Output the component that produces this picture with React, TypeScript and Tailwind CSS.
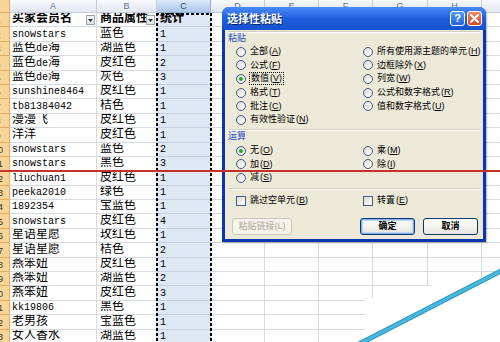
import React from "react";

const colW = [
  "w-[87px]",
  "w-[60px]",
  "w-[54px]",
  "w-[54px]",
  "w-[54px]",
  "w-[54px]",
  "w-[55px]",
  "w-[54px]",
  "w-[60px]",
];
const letters = ["A", "B", "C", "D", "E", "F", "G", "H", "I"];

const rows: [string, string, string][] = [
  ["买家会员名", "商品属性", "统计"],
  ["snowstars", "蓝色", "1"],
  ["蓝色de海", "湖蓝色", "1"],
  ["蓝色de海", "皮红色", "2"],
  ["蓝色de海", "灰色", "3"],
  ["sunshine8464", "皮红色", "1"],
  ["tb81384042", "桔色", "1"],
  ["漫漫飞", "皮红色", "1"],
  ["洋洋", "皮红色", "1"],
  ["snowstars", "蓝色", "2"],
  ["snowstars", "黑色", "3"],
  ["liuchuan1", "皮红色", "1"],
  ["peeka2010", "绿色", "1"],
  ["1892354", "宝蓝色", "1"],
  ["snowstars", "皮红色", "4"],
  ["星语星愿", "玫红色", "1"],
  ["星语星愿", "桔色", "2"],
  ["燕笨妞", "皮红色", "1"],
  ["燕笨妞", "湖蓝色", "2"],
  ["燕笨妞", "皮红色", "3"],
  ["kk19806", "黑色", "1"],
  ["老男孩", "宝蓝色", "1"],
  ["女人香水", "湖蓝色", "1"],
];

function Mixed({ text }: { text: string }) {
  const parts = text.match(/[\x00-\x7f]+|[^\x00-\x7f]+/g) || [];
  return (
    <>
      {parts.map((p, i) =>
        /^[\x00-\x7f]+$/.test(p) ? (
          <span key={i} className="text-[10px]">
            {p}
          </span>
        ) : (
          <span key={i}>{p}</span>
        )
      )}
    </>
  );
}

function Dropdown() {
  return (
    <span className="absolute right-[1px] top-[2px] w-[9px] h-[10px] border border-[#9aa3b0] bg-gradient-to-b from-[#fbfbfb] to-[#dcdfe4] flex items-center justify-center">
      <svg width="5" height="3" viewBox="0 0 5 3">
        <path d="M0 0 L5 0 L2.5 3 Z" fill="#333" />
      </svg>
    </span>
  );
}

function RowHead({ n }: { n: number }) {
  return (
    <div className="w-[10px] shrink-0 overflow-hidden bg-[#f8d596] border-b border-r border-[#e2ad5c] flex items-end">
      <div className="w-[24px] -ml-[14px] shrink-0 text-center text-[9px] leading-[12px] text-[#333] font-['Liberation_Sans',sans-serif]">
        {n}
      </div>
    </div>
  );
}

function Sheet() {
  return (
    <div className="flex flex-col">
      <div className="flex h-[13px] shrink-0">
        <div className="w-[10px] shrink-0 bg-[#f8d596] border-b border-r border-[#e2ad5c]" />
        {letters.map((l, i) => (
          <div
            key={l}
            className={`${colW[i]} shrink-0 flex items-center justify-center border-b border-r text-[9px] leading-[12px] font-['Liberation_Sans',sans-serif] ${
              i === 2
                ? "bg-gradient-to-b from-[#dbe8f8] to-[#aac6ea] border-[#8fb0d8] text-[#2b4a7a]"
                : "bg-gradient-to-b from-[#f7f9fc] to-[#e2e8f1] border-[#c5cddb] text-[#5f7290]"
            }`}
          >
            {l}
          </div>
        ))}
      </div>
      {rows.map((r, ri) => (
        <div key={ri} className="flex h-[14.4px] shrink-0">
          <RowHead n={ri + 1} />
          <div
            className={`${colW[0]} relative shrink-0 flex items-end overflow-hidden whitespace-nowrap border-b border-r border-[#d6dbe3] bg-white pl-[2px] text-[12px] leading-[13px] text-black font-['Liberation_Mono','Noto_Sans_CJK_SC',monospace] ${
              ri === 0 ? "font-bold" : ""
            }`}
          >
            <Mixed text={r[0]} />
            {ri === 0 && <Dropdown />}
          </div>
          <div
            className={`${colW[1]} relative shrink-0 flex items-end overflow-hidden whitespace-nowrap border-b border-r border-[#d6dbe3] bg-white pl-[3px] text-[12px] leading-[13px] text-black font-['Liberation_Mono','Noto_Sans_CJK_SC',monospace] ${
              ri === 0 ? "font-bold" : ""
            }`}
          >
            <Mixed text={r[1]} />
            {ri === 0 && <Dropdown />}
          </div>
          <div
            className={`${colW[2]} shrink-0 flex items-end overflow-hidden whitespace-nowrap border-b border-r border-[#c5cfdf] bg-[#dfe7f2] pl-[3px] text-[12px] leading-[13px] text-black font-['Liberation_Mono','Noto_Sans_CJK_SC',monospace] ${
              ri === 0 ? "font-bold" : ""
            }`}
          >
            <Mixed text={r[2]} />
          </div>
          {colW.slice(3).map((w, ci) => (
            <div key={ci} className={`${w} shrink-0 border-b border-r border-[#d6dbe3] bg-white`} />
          ))}
        </div>
      ))}
    </div>
  );
}

function Radio({ checked }: { checked?: boolean }) {
  return (
    <span className="w-[10px] h-[10px] shrink-0 rounded-full border border-[#3d5c86] bg-gradient-to-br from-[#dcdad2] to-white flex items-center justify-center">
      {checked && <span className="w-[4px] h-[4px] rounded-full bg-[#2aa52a]" />}
    </span>
  );
}

function Check() {
  return <span className="w-[10px] h-[10px] shrink-0 border border-[#3d5c86] bg-gradient-to-br from-[#dcdad2] to-white" />;
}

type Opt = [string, string, boolean?] | null;

function Label({ t, k, focus }: { t: string; k: string; focus?: boolean }) {
  return (
    <span className={`whitespace-nowrap ${focus ? "outline outline-1 outline-dotted outline-black px-[1px]" : ""}`}>
      {t}
      <span className="ml-[1px]">
        (<span className="underline">{k}</span>)
      </span>
    </span>
  );
}

function OptGrid({ left, right }: { left: Opt[]; right: Opt[] }) {
  return (
    <div className="grid grid-cols-[127px_1fr] pl-[11px]">
      {left.map((l, i) => (
        <React.Fragment key={i}>
          <div className="h-[13.6px] flex items-center gap-[4px]">
            {l && (
              <>
                <Radio checked={l[2]} />
                <Label t={l[0]} k={l[1]} focus={l[0] === "数值"} />
              </>
            )}
          </div>
          <div className="h-[13.6px] flex items-center gap-[4px]">
            {right[i] && (
              <>
                <Radio checked={right[i]![2]} />
                <Label t={right[i]![0]} k={right[i]![1]} />
              </>
            )}
          </div>
        </React.Fragment>
      ))}
    </div>
  );
}

function Sep({ className }: { className: string }) {
  return <div className={`mx-[3px] h-[2px] border-t border-b border-t-[#d0d0bf] border-b-white ${className}`} />;
}

function Dialog() {
  return (
    <div className="absolute left-[222px] top-[7px] w-[264px] h-[235px] rounded-t-[7px] bg-[#0d35b0] flex flex-col overflow-hidden shadow-[1px_1px_2px_rgba(0,0,0,0.3)]">
      <div className="h-[23px] shrink-0 flex items-center pl-[5px] pr-[4px] bg-gradient-to-b from-[#4a8cf6] via-[#1d5fdc] to-[#1552d0]">
        <span className="text-white font-bold text-[11px] leading-[13px] font-['Noto_Sans_CJK_SC',sans-serif] [text-shadow:1px_1px_0_#0a246a]">
          选择性粘贴
        </span>
        <div className="ml-auto flex gap-[2px] items-center">
          <span className="w-[15px] h-[15px] rounded-[3px] border border-white bg-gradient-to-b from-[#5a9bf8] to-[#2460dc] flex items-center justify-center text-white font-bold text-[11px] leading-[11px] font-['Liberation_Sans',sans-serif]">
            ?
          </span>
          <span className="w-[15px] h-[15px] rounded-[3px] border border-white bg-gradient-to-b from-[#ee8a66] to-[#d2431c] flex items-center justify-center">
            <svg width="9" height="9" viewBox="0 0 9 9">
              <path d="M1 1 L8 8 M8 1 L1 8" stroke="white" strokeWidth="2" strokeLinecap="round" />
            </svg>
          </span>
        </div>
      </div>
      <div className="flex-1 mx-[3px] mb-[3px] bg-[#ece9d8] flex flex-col text-[9px] leading-[11px] text-black font-['Liberation_Sans','Noto_Sans_CJK_SC',sans-serif]">
        <Sep className="mt-[1px]" />
        <div className="h-[11px] pl-[3px] text-[#1f4fc2] flex items-center">粘贴</div>
        <div className="mt-[1px]">
          <OptGrid
            left={[
              ["全部", "A"],
              ["公式", "F"],
              ["数值", "V", true],
              ["格式", "T"],
              ["批注", "C"],
              ["有效性验证", "N"],
            ]}
            right={[
              ["所有使用源主题的单元", "H"],
              ["边框除外", "X"],
              ["列宽", "W"],
              ["公式和数字格式", "R"],
              ["值和数字格式", "U"],
              null,
            ]}
          />
        </div>
        <Sep className="mt-[2px]" />
        <div className="h-[11px] pl-[3px] text-[#1f4fc2] flex items-center">运算</div>
        <div className="mt-[2.4px]">
          <OptGrid
            left={[
              ["无", "O", true],
              ["加", "D"],
              ["减", "S"],
            ]}
            right={[["乘", "M"], ["除", "I"], null]}
          />
        </div>
        <Sep className="mt-[3px]" />
        <div className="mt-[4px] h-[14px] grid grid-cols-[127px_1fr] pl-[11px]">
          <div className="flex items-center gap-[4px]">
            <Check />
            <Label t="跳过空单元" k="B" />
          </div>
          <div className="flex items-center gap-[4px]">
            <Check />
            <Label t="转置" k="E" />
          </div>
        </div>
        <div className="mt-[10px] flex items-center pl-[7px] pr-[5px]">
          <button className="h-[17px] w-[60px] rounded-[3px] border border-[#c9c7ba] bg-[#f5f4ea] text-[#aca899] text-[9px] leading-[11px]">
            粘贴链接(L)
          </button>
          <button className="ml-auto h-[17px] w-[55px] rounded-[3px] border border-[#003c74] bg-gradient-to-b from-white to-[#e6e5dd] shadow-[inset_0_0_0_1px_#89adea,inset_0_0_0_2px_#c2d5f7] text-[9px] leading-[11px] font-bold">
            确定
          </button>
          <button className="ml-[8px] h-[17px] w-[55px] rounded-[3px] border border-[#003c74] bg-gradient-to-b from-white to-[#e6e5dd] text-[9px] leading-[11px] font-bold">
            取消
          </button>
        </div>
      </div>
    </div>
  );
}

export default function App() {
  return (
    <div className="relative w-[500px] h-[342px] overflow-hidden bg-white">
      <Sheet />
      <div className="absolute left-[156px] top-[13px] w-[56px] h-[2px] bg-[repeating-linear-gradient(to_right,#000_0_3px,transparent_3px_5px)]" />
      <div className="absolute left-[156px] top-[13px] w-[2px] h-[340px] bg-[repeating-linear-gradient(to_bottom,#000_0_3px,transparent_3px_5px)]" />
      <div className="absolute left-[210px] top-[13px] w-[2px] h-[340px] bg-[repeating-linear-gradient(to_bottom,#000_0_3px,transparent_3px_5px)]" />
      <Dialog />
      <div className="absolute left-0 top-[170px] w-[500px] h-[2px] bg-[#c8302c]" />
      <svg className="absolute left-0 top-0 pointer-events-none" width="500" height="342" viewBox="0 0 500 342">
        <polygon points="365,300 373,298 428,286 482,277 500,274 500,342 365,342" fill="white" />
        <line x1="357" y1="345" x2="503" y2="270" stroke="#2b93bd" strokeWidth="5" />
        <line x1="357" y1="345" x2="503" y2="270" stroke="#47b8dc" strokeWidth="3" />
      </svg>
    </div>
  );
}
